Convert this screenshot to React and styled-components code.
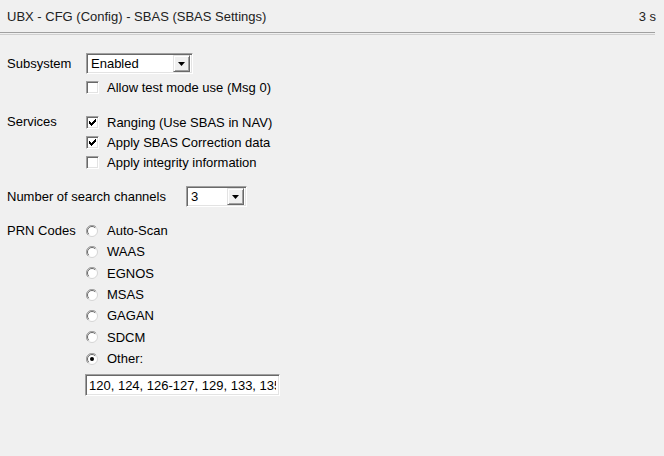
import React from 'react'
import styled, { createGlobalStyle } from 'styled-components'

const GlobalStyle = createGlobalStyle`
  html, body {
    margin: 0;
    padding: 0;
    background: #f0f0f0;
  }
  body {
    font-family: "Liberation Sans", Arial, sans-serif;
    font-size: 13px;
    color: #000;
  }
`

const Page = styled.div`
  width: 664px;
  height: 456px;
  background: #f0f0f0;
  overflow: hidden;
`

const Header = styled.div`
  display: flex;
  justify-content: space-between;
  align-items: center;
  height: 32px;
  padding: 0 8px 0 7px;
  color: #222;
`

const Separator = styled.div`
  height: 1px;
  margin-right: 9px;
  border-top: 1px solid #a0a0a0;
  border-bottom: 1px solid #cfcfcf;
`

const Form = styled.div`
  display: flex;
  flex-direction: column;
  padding-left: 7px;
`

const Row = styled.div`
  display: flex;
  align-items: center;
  height: ${p => p.$h || 21}px;
  margin-top: ${p => p.$top || 0}px;
`

const Label = styled.div`
  width: ${p => p.$w || 79}px;
  flex: none;
  white-space: nowrap;
`

const Stack = styled.div`
  display: flex;
  flex-direction: column;
`

const Combo = styled.div`
  box-sizing: border-box;
  display: flex;
  align-items: center;
  width: ${p => p.$w}px;
  height: 21px;
  background: #fff;
  border: 1px solid;
  border-color: #a0a0a0 #fff #fff #a0a0a0;
  box-shadow: inset 1px 1px #696969, inset -1px -1px #e3e3e3;
  padding: 2px 2px 2px 4px;
`

const ComboText = styled.span`
  flex: 1;
  line-height: 15px;
`

const DropButton = styled.div`
  box-sizing: border-box;
  width: 17px;
  height: 17px;
  background: #f0f0f0;
  border: 1px solid;
  border-color: #e3e3e3 #696969 #696969 #e3e3e3;
  box-shadow: inset 1px 1px #fff, inset -1px -1px #a0a0a0;
  display: flex;
  align-items: center;
  justify-content: center;
`

const Check = styled.label`
  display: flex;
  align-items: center;
  height: ${p => p.$h || 20}px;
  gap: 8px;
  white-space: nowrap;
`

const Box = styled.span`
  box-sizing: border-box;
  width: 13px;
  height: 13px;
  flex: none;
  background: #fff;
  border: 1px solid;
  border-color: #a0a0a0 #fff #fff #a0a0a0;
  box-shadow: inset 1px 1px #696969, inset -1px -1px #e3e3e3;
  display: flex;
  align-items: center;
  justify-content: center;
`

const Radio = styled.label`
  display: flex;
  align-items: center;
  height: 21.33px;
  gap: 9px;
  white-space: nowrap;
`

const TextField = styled.input`
  box-sizing: border-box;
  width: 195px;
  height: 22px;
  margin: 5px 0 0 78px;
  padding: 0 3px;
  font-family: "Liberation Sans", Arial, sans-serif;
  font-size: 13px;
  color: #000;
  background: #fff;
  border: 1px solid;
  border-color: #a0a0a0 #fff #fff #a0a0a0;
  box-shadow: inset 1px 1px #696969, inset -1px -1px #e3e3e3;
  outline: none;
`

const Arrow = () => (
  <svg width="7" height="4" viewBox="0 0 7 4">
    <path d="M0 0h7L3.5 4z" fill="#000" />
  </svg>
)

const CheckBox = ({ checked, children, h }) => (
  <Check $h={h}>
    <Box>
      {checked && (
        <svg width="7" height="7" viewBox="0 0 7 7" shapeRendering="crispEdges">
          <path d="M0 2h1v3h-1zM1 3h1v3h-1zM2 4h1v3h-1zM3 3h1v3h-1zM4 2h1v3h-1zM5 1h1v3h-1zM6 0h1v3h-1z" fill="#000" />
        </svg>
      )}
    </Box>
    {children}
  </Check>
)

const RadioDot = ({ checked }) => (
  <svg width="12" height="12" viewBox="0 0 12 12">
    <circle cx="6" cy="6" r="5.5" fill="#fff" stroke="#d4d4d4" />
    <path d="M10 2A5.5 5.5 0 0 0 2 10" fill="none" stroke="#a0a0a0" />
    <path d="M9.2 2.8A4.5 4.5 0 0 0 2.8 9.2" fill="none" stroke="#696969" />
    {checked && <circle cx="6" cy="6" r="2" fill="#000" />}
  </svg>
)

const prnOptions = ['Auto-Scan', 'WAAS', 'EGNOS', 'MSAS', 'GAGAN', 'SDCM', 'Other:']

export default function App() {
  return (
    <Page>
      <GlobalStyle />
      <Header>
        <span>UBX - CFG (Config) - SBAS (SBAS Settings)</span>
        <span>3 s</span>
      </Header>
      <Separator />
      <Form>
        <Row $top={18}>
          <Label>Subsystem</Label>
          <Combo $w={107}>
            <ComboText>Enabled</ComboText>
            <DropButton><Arrow /></DropButton>
          </Combo>
        </Row>
        <Row $top={6} $h={15}>
          <Label />
          <CheckBox h={15}>Allow test mode use (Msg 0)</CheckBox>
        </Row>
        <Row $top={17} $h={60} style={{ alignItems: 'flex-start' }}>
          <Label style={{ lineHeight: '20px' }}>Services</Label>
          <Stack>
            <CheckBox checked>Ranging (Use SBAS in NAV)</CheckBox>
            <CheckBox checked>Apply SBAS Correction data</CheckBox>
            <CheckBox>Apply integrity information</CheckBox>
          </Stack>
        </Row>
        <Row $top={14}>
          <Label $w={179}>Number of search channels</Label>
          <Combo $w={61}>
            <ComboText>3</ComboText>
            <DropButton><Arrow /></DropButton>
          </Combo>
        </Row>
        <Row $top={13} $h={149.33} style={{ alignItems: 'flex-start' }}>
          <Label style={{ lineHeight: '21.33px' }}>PRN Codes</Label>
          <Stack>
            {prnOptions.map(o => (
              <Radio key={o}>
                <RadioDot checked={o === 'Other:'} />
                {o}
              </Radio>
            ))}
          </Stack>
        </Row>
        <TextField readOnly defaultValue="120, 124, 126-127, 129, 133, 135-138" />
      </Form>
    </Page>
  )
}
